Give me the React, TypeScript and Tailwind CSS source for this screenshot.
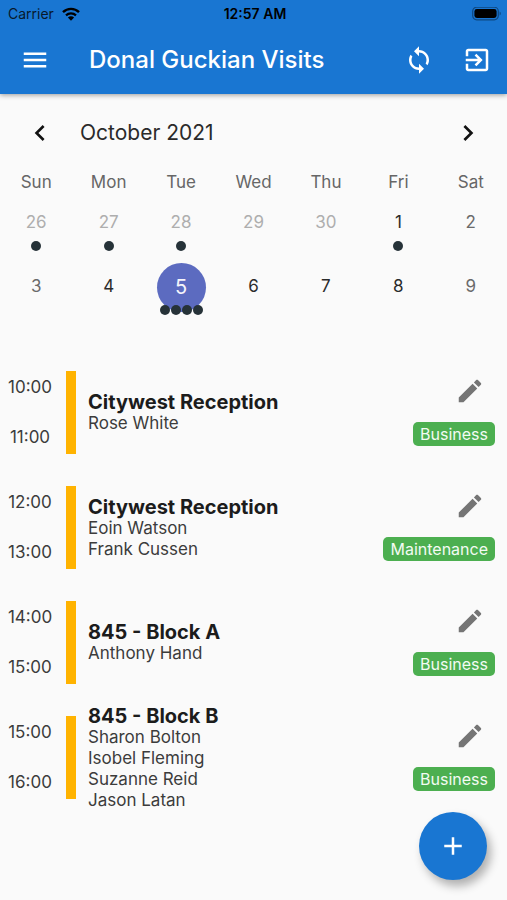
import React, { useState } from "react";

type Visit = {
  start: string;
  end: string;
  place: string;
  people: string[];
  kind: string;
};

type Day = { day: number; tone: string; visits: number };

const WEEKDAYS = ["Sun", "Mon", "Tue", "Wed", "Thu", "Fri", "Sat"];

const OUTSIDE = "text-[#aeaeae]";
const WEEKEND = "text-[#6a6a6a]";
const NORMAL = "text-[#2b2b2b]";

const WEEKS: Day[][] = [
  [
    { day: 26, tone: OUTSIDE, visits: 1 },
    { day: 27, tone: OUTSIDE, visits: 1 },
    { day: 28, tone: OUTSIDE, visits: 1 },
    { day: 29, tone: OUTSIDE, visits: 0 },
    { day: 30, tone: OUTSIDE, visits: 0 },
    { day: 1, tone: NORMAL, visits: 1 },
    { day: 2, tone: WEEKEND, visits: 0 },
  ],
  [
    { day: 3, tone: WEEKEND, visits: 0 },
    { day: 4, tone: NORMAL, visits: 0 },
    { day: 5, tone: NORMAL, visits: 4 },
    { day: 6, tone: NORMAL, visits: 0 },
    { day: 7, tone: NORMAL, visits: 0 },
    { day: 8, tone: NORMAL, visits: 0 },
    { day: 9, tone: WEEKEND, visits: 0 },
  ],
];

const VISITS: Visit[] = [
  { start: "10:00", end: "11:00", place: "Citywest Reception", people: ["Rose White"], kind: "Business" },
  { start: "12:00", end: "13:00", place: "Citywest Reception", people: ["Eoin Watson", "Frank Cussen"], kind: "Maintenance" },
  { start: "14:00", end: "15:00", place: "845 - Block A", people: ["Anthony Hand"], kind: "Business" },
  {
    start: "15:00",
    end: "16:00",
    place: "845 - Block B",
    people: ["Sharon Bolton", "Isobel Fleming", "Suzanne Reid", "Jason Latan"],
    kind: "Business",
  },
];

const ICONS = {
  menu: "M3 18h18v-2H3v2zm0-5h18v-2H3v2zm0-7v2h18V6H3z",
  sync: "M12 4V1L8 5l4 4V6c3.31 0 6 2.69 6 6 0 1.01-.25 1.97-.7 2.8l1.46 1.46C19.54 15.03 20 13.57 20 12c0-4.42-3.58-8-8-8zm0 14c-3.31 0-6-2.69-6-6 0-1.01.25-1.97.7-2.8L5.24 7.74C4.46 8.97 4 10.43 4 12c0 4.42 3.58 8 8 8v3l4-4-4-4v3z",
  exit: "M10.09 15.59L11.5 17l5-5-5-5-1.41 1.41L12.67 11H3v2h9.67l-2.58 2.59zM19 3H5c-1.11 0-2 .9-2 2v4h2V5h14v14H5v-4H3v4c0 1.1.89 2 2 2h14c1.1 0 2-.9 2-2V5c0-1.1-.9-2-2-2z",
  left: "M15.41 7.41L14 6l-6 6 6 6 1.41-1.41L10.83 12z",
  right: "M10 6L8.59 7.41 13.17 12l-4.58 4.59L10 18l6-6z",
  edit: "M3 17.25V21h3.75L17.81 9.94l-3.75-3.75L3 17.25zM20.71 7.04c.39-.39.39-1.02 0-1.41l-2.34-2.34c-.39-.39-1.02-.39-1.41 0l-1.83 1.83 3.75 3.75 1.83-1.83z",
  add: "M19 13h-6v6h-2v-6H5v-2h6V5h2v6h6v2z",
};

function Icon({ name, className }: { name: keyof typeof ICONS; className: string }) {
  return (
    <svg viewBox="0 0 24 24" fill="currentColor" aria-hidden="true" className={className}>
      <path d={ICONS[name]} />
    </svg>
  );
}

function StatusBar() {
  return (
    <div className="grid h-7 grid-cols-3 items-center pr-[5px] pl-2 text-sm text-[#08192c]">
      <div className="flex items-center gap-2">
        <span>Carrier</span>
        <svg viewBox="0 0 18 14" fill="none" className="h-[14px] w-[18px]" aria-hidden="true">
          <path d="M1 5.2a11.4 11.4 0 0 1 16 0" stroke="#000" strokeWidth="2.4" />
          <path d="M4 8.4a7.2 7.2 0 0 1 10 0" stroke="#000" strokeWidth="2.2" />
          <path d="M9 13.8L5.9 10.6a4.4 4.4 0 0 1 6.2 0z" fill="#000" />
        </svg>
      </div>
      <span className="text-center font-semibold text-black">12:57 AM</span>
      <svg viewBox="0 0 30 14" className="h-[14px] w-[30px] justify-self-end" aria-hidden="true">
        <rect x="0.7" y="0.2" width="25.6" height="12.6" rx="4" fill="none" stroke="#0f4880" strokeWidth="1.2" />
        <rect x="2.4" y="2" width="22.2" height="9" rx="2.4" fill="#000" />
        <path d="M27.6 4.5v4c1.6-.5 1.6-3.5 0-4z" fill="#0f4880" />
      </svg>
    </div>
  );
}

function DayCell({ item, selected, onSelect }: { item: Day; selected: boolean; onSelect: () => void }) {
  return (
    <button
      type="button"
      onClick={onSelect}
      aria-pressed={selected}
      className={"relative flex h-16 items-center justify-center " + (selected ? "text-xl text-[#f5f5fb]" : "text-[17px] " + item.tone)}
    >
      <span className={"flex size-[49px] items-center justify-center rounded-full " + (selected ? "bg-[#5c6bc0]" : "")}>
        {item.day}
      </span>
      <span className="absolute inset-x-0 bottom-1 flex justify-center gap-px">
        {Array.from({ length: item.visits }, (_, i) => (
          <span key={i} className="size-[10px] rounded-full bg-[#263238]" />
        ))}
      </span>
    </button>
  );
}

function Calendar() {
  const [selected, setSelected] = useState(5);
  return (
    <section>
      <div className="flex h-[78px] items-center pr-[23px] pl-6">
        <button type="button" aria-label="Previous month" className="text-[#111]">
          <Icon name="left" className="size-8" />
        </button>
        <h2 className="ml-6 flex-1 text-[21px] text-[#2a2a2a]">October 2021</h2>
        <button type="button" aria-label="Next month" className="text-[#111]">
          <Icon name="right" className="size-8" />
        </button>
      </div>
      <div className="grid h-[19px] grid-cols-7 text-center text-[17px] leading-5 text-[#666]">
        {WEEKDAYS.map((name) => (
          <span key={name}>{name}</span>
        ))}
      </div>
      {WEEKS.map((week, i) => (
        <div key={i} className="grid grid-cols-7">
          {week.map((item) => (
            <DayCell key={item.day} item={item} selected={item.day === selected} onSelect={() => setSelected(item.day)} />
          ))}
        </div>
      ))}
    </section>
  );
}

function VisitRow({ visit }: { visit: Visit }) {
  return (
    <li className="flex h-[115px] items-center pr-3 pl-[7px] text-[17px] text-[#3c3c3c]">
      <div className="mr-[13px] flex w-[46px] flex-col gap-[30px] pb-0.5 text-center leading-5">
        <time>{visit.start}</time>
        <time>{visit.end}</time>
      </div>
      <div className="h-[83px] w-[10px] bg-[#ffb300]" />
      <div className="ml-3 flex-1 leading-[21px]">
        <h3 className="text-xl leading-[22px] font-bold text-[#1c1c1c]">{visit.place}</h3>
        {visit.people.map((person) => (
          <p key={person}>{person}</p>
        ))}
      </div>
      <div className="flex flex-col items-end gap-4 pb-1">
        <button type="button" aria-label={"Edit " + visit.place} className="mr-[10px] text-[#757575]">
          <Icon name="edit" className="size-[30px]" />
        </button>
        <span className="rounded-[5px] bg-[#4caf50] px-[7px] text-base leading-6 text-[#f3fbf3]">{visit.kind}</span>
      </div>
    </li>
  );
}

export default function App() {
  return (
    <div className="min-h-screen bg-[#fafafa] font-['Inter','Liberation_Sans',sans-serif]">
      <header className="bg-[#1976d2] shadow-[0_1px_5px_rgba(0,0,0,0.4)]">
        <StatusBar />
        <div className="flex h-[66px] items-center pr-[15px] pb-0.5 pl-5 text-white">
          <button type="button" aria-label="Open menu">
            <Icon name="menu" className="size-[30px]" />
          </button>
          <h1 className="ml-[39px] flex-1 text-2xl font-medium">Donal Guckian Visits</h1>
          <div className="flex gap-7">
            <button type="button" aria-label="Refresh">
              <Icon name="sync" className="size-[30px]" />
            </button>
            <button type="button" aria-label="Sign out">
              <Icon name="exit" className="size-[30px]" />
            </button>
          </div>
        </div>
      </header>
      <main>
        <Calendar />
        <ul className="pt-9">
          {VISITS.map((visit) => (
            <VisitRow key={visit.start} visit={visit} />
          ))}
        </ul>
      </main>
      <button
        type="button"
        aria-label="Add visit"
        className="fixed right-5 bottom-5 flex size-[68px] items-center justify-center rounded-full bg-[#1976d2] text-white shadow-[4px_6px_10px_rgba(0,0,0,0.3)]"
      >
        <Icon name="add" className="size-[30px]" />
      </button>
    </div>
  );
}
